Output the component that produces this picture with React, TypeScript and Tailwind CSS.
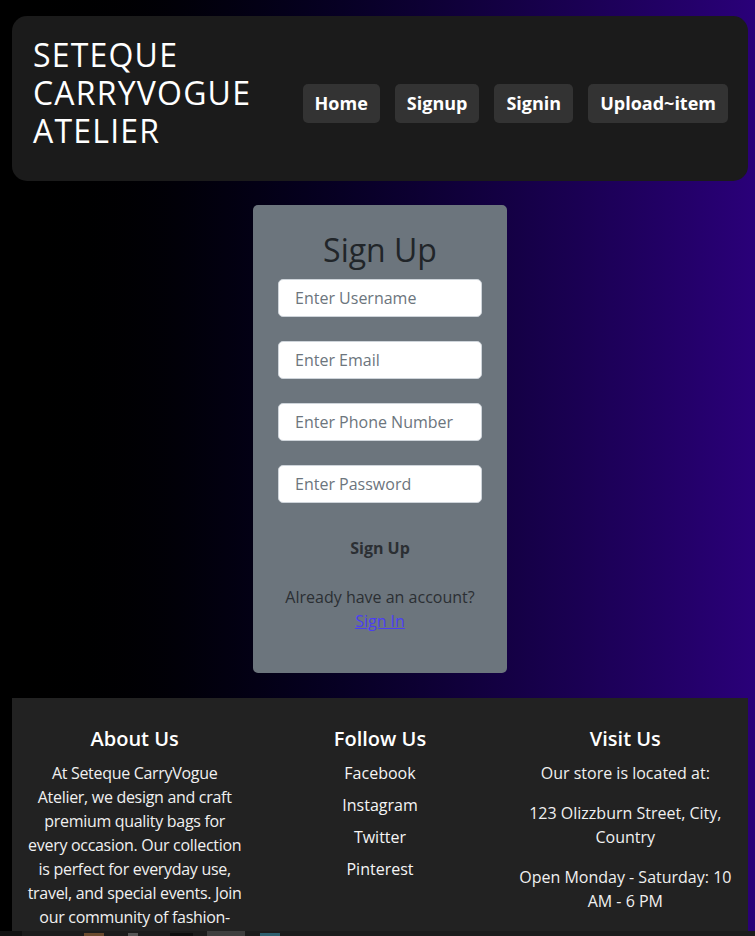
import { useState } from 'react';

export default function App() {
  const [form, setForm] = useState({ username: '', email: '', phone: '', password: '' });

  const navItems = ['Home', 'Signup', 'Signin', 'Upload~item'];

  return (
    <div className="min-h-screen bg-gradient-to-r from-black to-[#2a0079] pt-4 font-['Open_Sans',sans-serif]">
      <div className="ml-3 w-[736px]">
        {/* Header */}
        <header className="flex items-start justify-between rounded-[15px] bg-[#1b1b1b] pl-[21px] pr-5 pt-5 pb-[31px]">
          <h1 className="w-[240px] text-[32px] leading-[38px] tracking-[1.2px] text-white">
            SETEQUE CARRYVOGUE ATELIER
          </h1>
          <nav className="mt-12 flex gap-[15px]">
            {navItems.map((item) => (
              <a
                key={item}
                href="#"
                className="rounded-[5px] bg-[#333333] px-3 py-2 text-[18px] font-bold leading-[23px] text-white"
              >
                {item}
              </a>
            ))}
          </nav>
        </header>

        {/* Sign up card */}
        <div className="mx-auto mt-6 w-[254px] rounded-[5px] bg-[#6c757d] px-[25px] pt-[25px] pb-10 text-center text-[#212529]">
          <h2 className="mb-[9px] text-[32px] leading-10">Sign Up</h2>
          <form className="flex flex-col gap-6" onSubmit={(e) => e.preventDefault()}>
            <input
              type="text"
              placeholder="Enter Username"
              value={form.username}
              onChange={(e) => setForm({ ...form, username: e.target.value })}
              className="block h-[38px] w-full rounded-[5px] border border-[#ced4da] bg-white px-4 text-base text-[#212529] outline-none placeholder:text-[#6c757d]"
            />
            <input
              type="email"
              placeholder="Enter Email"
              value={form.email}
              onChange={(e) => setForm({ ...form, email: e.target.value })}
              className="block h-[38px] w-full rounded-[5px] border border-[#ced4da] bg-white px-4 text-base text-[#212529] outline-none placeholder:text-[#6c757d]"
            />
            <input
              type="tel"
              placeholder="Enter Phone Number"
              value={form.phone}
              onChange={(e) => setForm({ ...form, phone: e.target.value })}
              className="block h-[38px] w-full rounded-[5px] border border-[#ced4da] bg-white px-4 text-base text-[#212529] outline-none placeholder:text-[#6c757d]"
            />
            <input
              type="password"
              placeholder="Enter Password"
              value={form.password}
              onChange={(e) => setForm({ ...form, password: e.target.value })}
              className="block h-[38px] w-full rounded-[5px] border border-[#ced4da] bg-white px-4 text-base text-[#212529] outline-none placeholder:text-[#6c757d]"
            />
          </form>
          <button className="mx-auto mt-[33px] block text-base font-bold leading-6 text-[#2b2f33]">Sign Up</button>
          <p className="mt-[25px] text-base leading-6 text-[#2b2f33]">Already have an account?</p>
          <a href="#" className="text-base leading-6 text-[#4b3ef2] underline">
            Sign In
          </a>
        </div>

        {/* Footer */}
        <footer className="mt-[25px] grid grid-cols-3 bg-[#222222] pt-[29px] pb-8 text-center text-[#f0f0f0]">
          <div className="px-2">
            <h5 className="mb-[10px] text-[20px] font-semibold leading-6 text-white">About Us</h5>
            <p className="text-base leading-6 tracking-[-0.3px]">
              At Seteque CarryVogue
              <br />
              Atelier, we design and craft
              <br />
              premium quality bags for
              <br />
              every occasion. Our collection
              <br />
              is perfect for everyday use,
              <br />
              travel, and special events. Join
              <br />
              our community of fashion-
              <br />
              forward individuals today!
            </p>
          </div>
          <div className="px-3">
            <h5 className="mb-[10px] text-[20px] font-semibold leading-6 text-white">Follow Us</h5>
            <ul>
              {['Facebook', 'Instagram', 'Twitter', 'Pinterest'].map((s) => (
                <li key={s} className="mb-2 text-base leading-6">
                  <a href="#" className="text-[#f5f5f5]">
                    {s}
                  </a>
                </li>
              ))}
            </ul>
          </div>
          <div className="px-3">
            <h5 className="mb-[10px] text-[20px] font-semibold leading-6 text-white">Visit Us</h5>
            <p className="mb-4 text-base leading-6">Our store is located at:</p>
            <p className="mb-4 text-base leading-6">123 Olizzburn Street, City, Country</p>
            <p className="mb-4 text-base leading-6">Open Monday - Saturday: 10 AM - 6 PM</p>
          </div>
        </footer>
      </div>

      {/* Taskbar strip */}
      <div className="fixed bottom-0 left-0 flex h-[5px] w-full items-end bg-[#1c1c1c]">
        <div className="h-[5px] w-[22px] bg-[#111111]" />
        <div className="ml-[62px] h-[3px] w-5 bg-[#6a4a2e]" />
        <div className="ml-6 h-[3px] w-[10px] bg-[#555555]" />
        <div className="ml-8 h-[3px] w-[23px] bg-[#0e0e0e]" />
        <div className="ml-[14px] h-[5px] w-[38px] bg-[#3e3e3e]" />
        <div className="ml-[15px] h-[3px] w-5 bg-[#2e5f6e]" />
      </div>
    </div>
  );
}
